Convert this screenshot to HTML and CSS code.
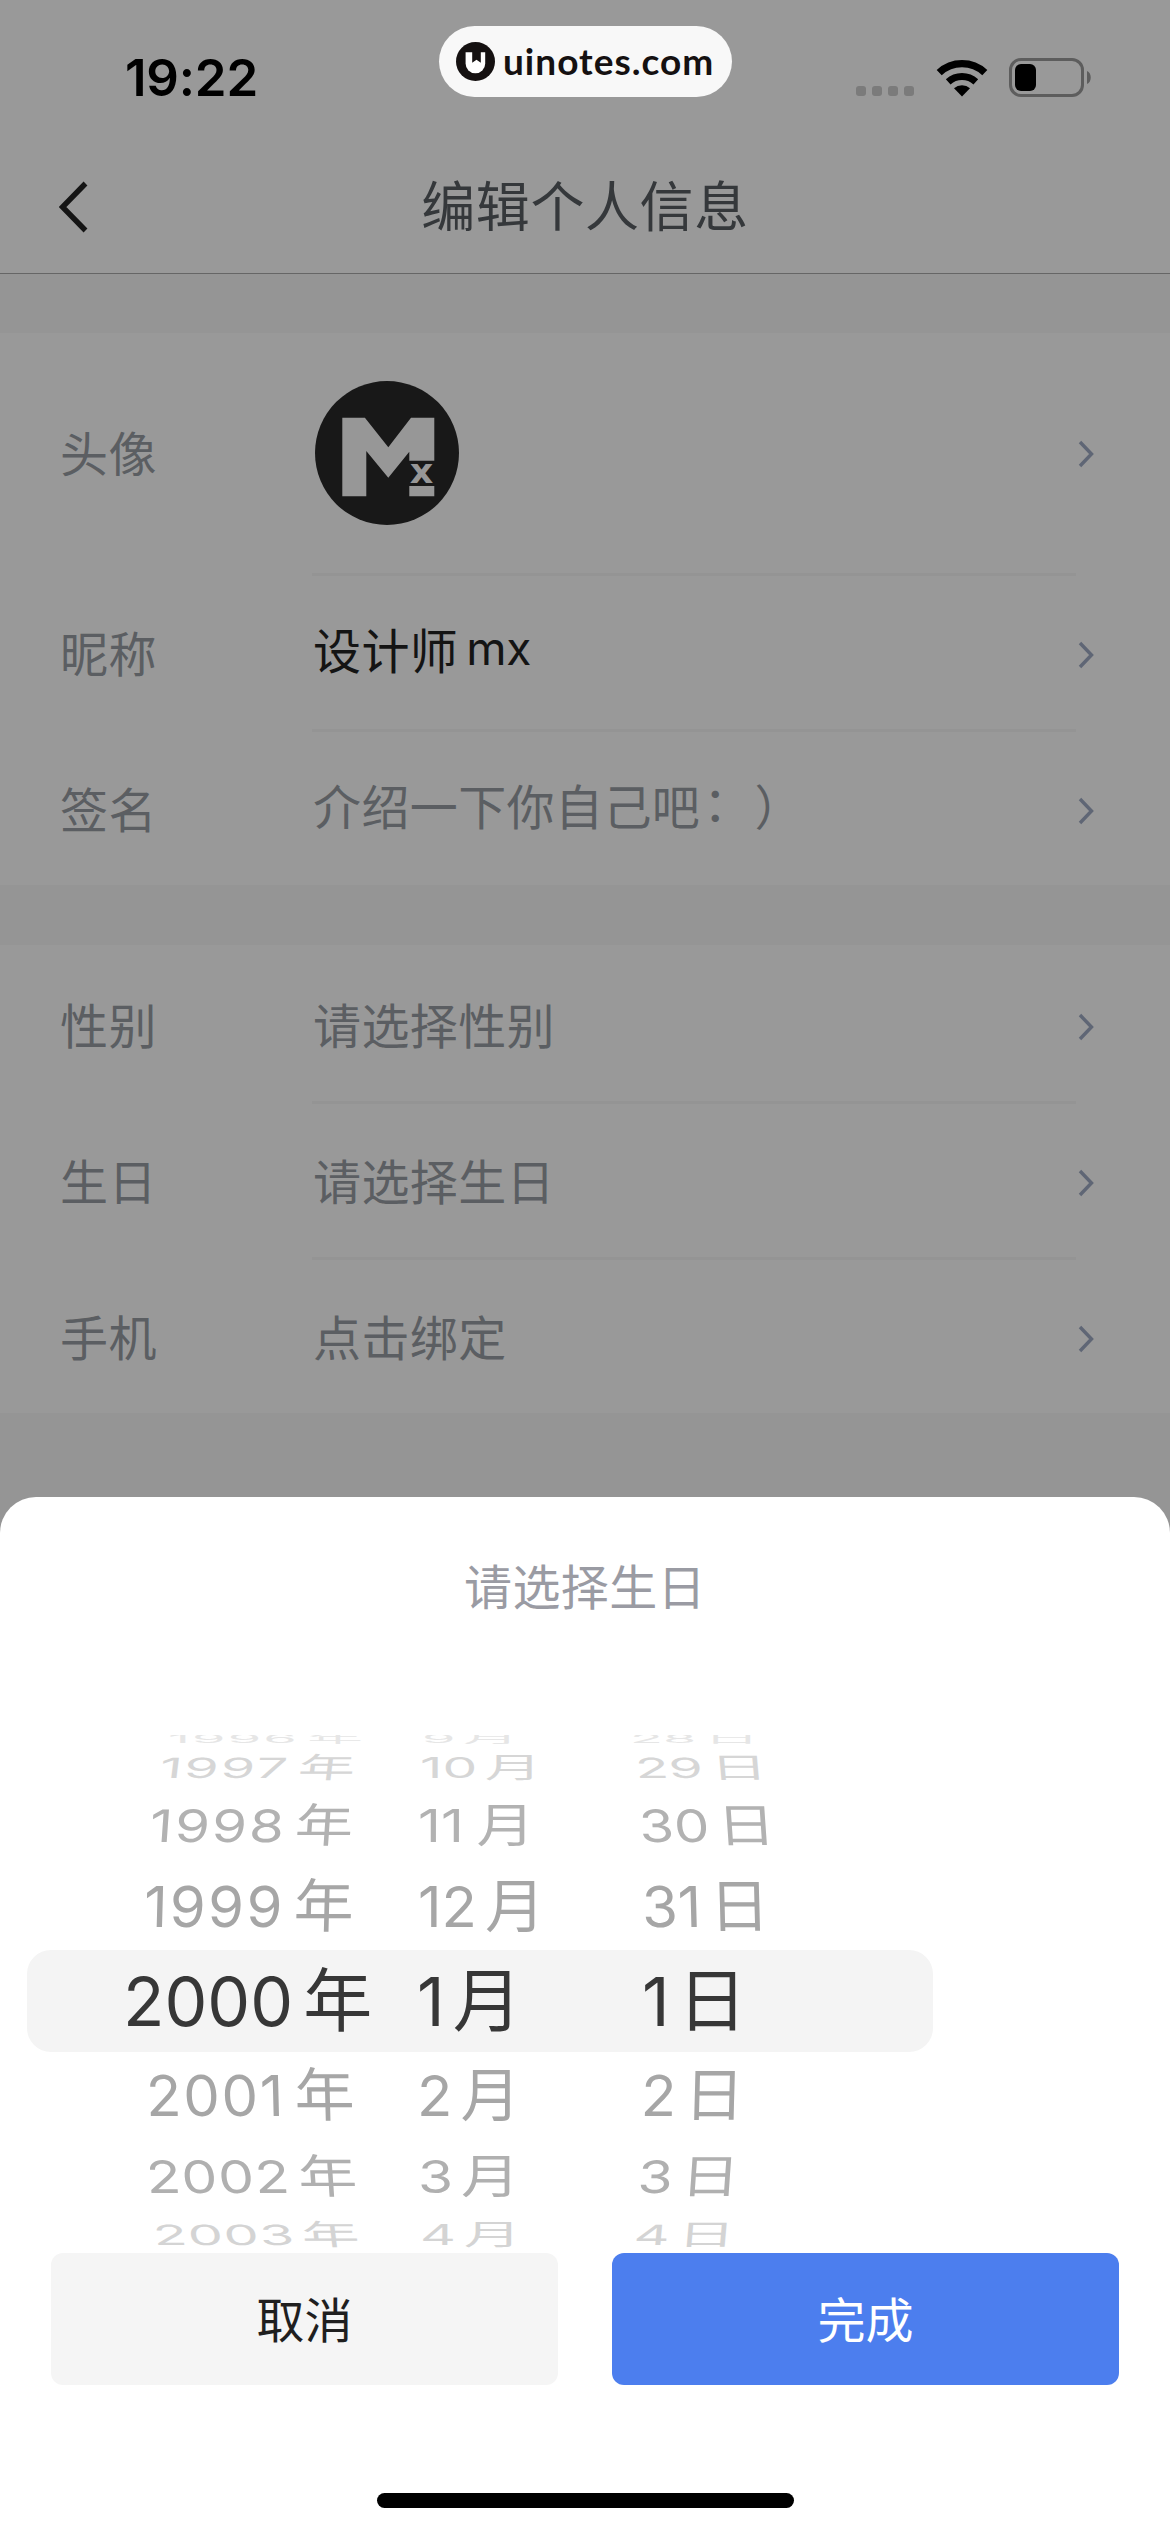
FILE: index.html
```html
<!DOCTYPE html>
<html lang="zh-CN">
<head>
<meta charset="utf-8">
<title>编辑个人信息</title>
<link rel="stylesheet" href="styles.css">
</head>
<body>
<svg class="defs" width="0" height="0" aria-hidden="true">
  <symbol id="chevron" viewBox="0 0 16 28"><path d="M2 2 13.5 14 2 26" fill="none" stroke="currentColor" stroke-width="3.4"/></symbol>
</svg>
<div class="screen">
  <header class="top">
    <div class="status">
      <span class="time">19:22</span>
      <div class="brand">
        <svg class="brand-mark" viewBox="0 0 39 39"><circle cx="19.5" cy="19.5" r="19.5" fill="#151111"/><path d="M9.600 10.200h19.600V21.500a9.800 9.800 0 0 1-19.600 0z" fill="#fff"/><path d="M16.200 9v11.800l4.300-3 4.300 3V9z" fill="#151111"/></svg>
        <span class="brand-name">uinotes.com</span>
      </div>
      <div class="indicators">
        <div class="dots"><i></i><i></i><i></i><i></i></div>
        <svg class="wifi" viewBox="0 0 52 38"><path d="M26 37.500 18 29.200a12 12 0 0 1 16 0z"/><path d="M12.200 22.800a20.500 20.500 0 0 1 27.600 0" fill="none" stroke="#000" stroke-width="7"/><path d="M3.200 13.600a33.500 33.500 0 0 1 45.600 0" fill="none" stroke="#000" stroke-width="7.400"/></svg>
        <svg class="battery" viewBox="0 0 84 39"><rect x="1.500" y="1.500" width="72" height="36" rx="10.500" fill="none" stroke="#5d5d5d" stroke-width="3"/><rect x="6" y="6" width="21" height="27" rx="6"/><path d="M78 13c5 2 5 11 0 13z" fill="#5d5d5d"/></svg>
      </div>
    </div>
    <div class="nav">
      <svg class="back" viewBox="0 0 30 52"><path d="M26.500 2.500 3.500 26l23 23.500" fill="none" stroke="#151515" stroke-width="5.400"/></svg>
      <h1>编辑个人信息</h1>
    </div>
  </header>
  <main>
    <section class="group">
      <div class="row avatar-row">
        <span class="label">头像</span>
        <div class="value">
          <svg class="avatar" viewBox="0 0 144 144"><circle cx="72" cy="72" r="72" fill="#181818"/><path fill="#979797" d="M27.300 36.700h22.600L73.300 66.300 96 36.700h23.300v43h-25v-9l-21 26L51.300 70v45.300h-24zM94.300 105h25v10.300h-25z"/><text class="avatar-x" x="106.800" y="101.800" text-anchor="middle" textLength="24" lengthAdjust="spacingAndGlyphs">x</text></svg>
        </div>
        <svg class="go"><use href="#chevron"/></svg>
      </div>
      <div class="row"><span class="label">昵称</span><div class="value line raised name">设计师<span class="latin">mx</span></div><svg class="go"><use href="#chevron"/></svg></div>
      <div class="row"><span class="label">签名</span><div class="value line raised">介绍一下你自己吧<span class="colon">：</span>）</div><svg class="go"><use href="#chevron"/></svg></div>
    </section>
    <section class="group">
      <div class="row"><span class="label">性别</span><div class="value">请选择性别</div><svg class="go"><use href="#chevron"/></svg></div>
      <div class="row"><span class="label">生日</span><div class="value line">请选择生日</div><svg class="go"><use href="#chevron"/></svg></div>
      <div class="row"><span class="label">手机</span><div class="value line">点击绑定</div><svg class="go"><use href="#chevron"/></svg></div>
    </section>
  </main>
  <section class="sheet">
    <h2>请选择生日</h2>
    <div class="picker">
      <div class="item t4"><div class="y"><p><b>1996</b>年</p></div><div class="m"><p><b>9</b>月</p></div><div class="d"><p><b>28</b>日</p></div></div>
      <div class="item t3"><div class="y"><p><b>1997</b>年</p></div><div class="m"><p><b>10</b>月</p></div><div class="d"><p><b>29</b>日</p></div></div>
      <div class="item t2"><div class="y"><p><b>1998</b>年</p></div><div class="m"><p><b>11</b>月</p></div><div class="d"><p><b>30</b>日</p></div></div>
      <div class="item t1"><div class="y"><p><b>1999</b>年</p></div><div class="m"><p><b>12</b>月</p></div><div class="d"><p><b>31</b>日</p></div></div>
      <div class="item now"><div class="y"><p><b>2000</b>年</p></div><div class="m"><p><b>1</b>月</p></div><div class="d"><p><b>1</b>日</p></div></div>
      <div class="item b1"><div class="y"><p><b>2001</b>年</p></div><div class="m"><p><b>2</b>月</p></div><div class="d"><p><b>2</b>日</p></div></div>
      <div class="item b2"><div class="y"><p><b>2002</b>年</p></div><div class="m"><p><b>3</b>月</p></div><div class="d"><p><b>3</b>日</p></div></div>
      <div class="item b3"><div class="y"><p><b>2003</b>年</p></div><div class="m"><p><b>4</b>月</p></div><div class="d"><p><b>4</b>日</p></div></div>
    </div>
    <div class="actions">
      <button class="cancel">取消</button>
      <button class="done">完成</button>
    </div>
    <div class="home"></div>
  </section>
</div>
</body>
</html>
```
FILE: styles.css
```css
* { box-sizing: border-box; }
body { margin: 0; background: #959595; font-family: "Noto Sans CJK SC", sans-serif; font-size: 48px; }
h1, h2, p { margin: 0; font-weight: 400; }
.defs { display: block; height: 0; }
.screen { width: 1170px; height: 2532px; display: flex; flex-direction: column; overflow: hidden; }

.top { height: 274px; background: #999; border-bottom: 1px solid #666; }
.status { height: 140px; display: grid; grid-template-columns: 439px 293px 438px; align-items: start; }
.time { padding: 47px 0 0 125px; font: 600 51px/61px Inter, sans-serif; letter-spacing: -0.2px; }
.brand { margin-top: 26px; height: 71px; border-radius: 36px; background: #f8f8f8; display: flex; align-items: center; padding-left: 17px; gap: 8px; }
.brand-mark { width: 39px; height: 39px; }
.brand-name { font: 700 37px/44px Lato, sans-serif; color: #151111; letter-spacing: 1px; padding-bottom: 1px; }
.indicators { display: flex; padding: 58px 0 0 124px; }
.dots { display: flex; gap: 6px; padding-top: 28px; width: 80px; }
.dots i { width: 10px; height: 10px; border-radius: 3px; background: #7b7b7b; }
.wifi { width: 52px; height: 38px; margin-top: 1px; }
.battery { width: 84px; height: 39px; margin-left: 21px; }
.nav { height: 133px; display: grid; grid-template-columns: 200px 770px 200px; align-items: center; }
.back { width: 30px; height: 52px; margin-left: 59px; }
.nav h1 { text-align: center; font-size: 54px; line-height: 80px; letter-spacing: 0.6px; color: #35383b; padding-bottom: 5px; }

.group { margin: 59px 0 0; background: #999; }
.group + .group { margin-top: 60px; }
.row { height: 156px; display: grid; grid-template-columns: 312px 764px 94px; color: #5b5e62; line-height: 70px; letter-spacing: 0.4px; }
.avatar-row { height: 240px; }
.label { align-self: center; padding: 0 0 0 60px; }
.avatar-row .label { padding-bottom: 5px; }
.value { display: flex; align-items: center; padding: 0 0 4px 1px; border-top: 3px solid transparent; }
.value.line { border-top-color: #949494; }
.value.raised { padding-bottom: 10px; }
.value.name { color: #141414; }
.avatar-row .value { padding: 0 0 3px 3px; }
.avatar { width: 144px; height: 144px; }
.avatar-x { font: bold 34px "DejaVu Sans", sans-serif; fill: #979797; }
.latin { font: 46px/70px Inter, sans-serif; letter-spacing: -0.3px; margin-left: 8px; padding-top: 1px; }
.colon { position: relative; top: -4px; left: 3px; margin-right: 6px; }
.go { width: 16px; height: 28px; align-self: center; margin: 7px 0 0 2px; color: #5f6675; }
.avatar-row .go { margin-top: 2px; }

.sheet { margin-top: 84px; height: 1035px; background: #fff; border-radius: 36px 36px 0 0; }
.sheet h2 { padding-top: 52px; height: 238px; text-align: center; font-size: 48px; line-height: 70px; letter-spacing: 0.4px; color: #9a9ba3; }
.picker { height: 518px; overflow: hidden; display: flex; flex-direction: column; }
.item { flex: none; display: grid; grid-template-columns: 400px 220px 400px; width: 1020px; }
.item > div { display: flex; align-items: center; height: 100%; min-height: 0; }
.item p { flex: none; height: 80px; line-height: 70px; font-size: 60px; white-space: nowrap; transform-origin: 0 50%; }
.item b { display: inline-block; font: 400 58px/70px Inter, sans-serif; margin-right: 8px; vertical-align: baseline; }
.item .y b { letter-spacing: 2.3px; margin-right: 9px; }
.item.b1 .y b { letter-spacing: 1.8px; }
.item.b2 .y b { letter-spacing: 0.8px; margin-right: 8px; }
.item.b3 .y b { letter-spacing: 0.8px; margin-right: 7px; }
.item.t2 .m b { margin-right: 13px; }
.t4 { height: 16px; margin-top: -4px; color: #e6e6e6; }
.t3 { height: 41px; color: #d6d6d6; }
.t2 { height: 75px; color: #b2b2b2; }
.t1 { height: 87px; color: #a6a6a6; }
.now { height: 102px; width: 906px; margin-left: 27px; border-radius: 24px; background: #f4f4f4; color: #373737; grid-template-columns: 373px 220px 313px; }
.b1 { height: 87px; color: #a6a6a6; }
.b2 { height: 75px; color: #b0b0b0; }
.b3 { height: 41px; color: #d4d4d4; }

.t4 p { transform: scale(.93, .2); }
.t3 p { transform: skewX(var(--lean, 0deg)) scale(.95, .48); }
.t2 p { transform: skewX(var(--lean, 0deg)) scale(.97, .77); }
.t1 p { transform: skewX(var(--lean, 0deg)) scale(1, .97); }
.b1 p { transform: skewX(var(--lean, 0deg)) scale(1, .97); }
.b2 p { transform: skewX(var(--lean, 0deg)) scale(.98, .77); }
.b3 p { transform: skewX(var(--lean, 0deg)) scale(.96, .48); }
.t3 .y { --lean: -7deg; } .t2 .y { --lean: -4deg; } .t1 .y { --lean: -1.5deg; }
.b3 .y { --lean: 7deg; } .b2 .y { --lean: 4deg; } .b1 .y { --lean: 1.5deg; }
.t3 .d { --lean: 5deg; } .t2 .d { --lean: 4deg; } .t1 .d { --lean: 1.5deg; }
.b3 .d { --lean: -5deg; } .b2 .d { --lean: -4deg; } .b1 .d { --lean: -1.5deg; }
.now p { font-size: 69px; }
.now b { font-size: 68px; }
.item.now .y b { letter-spacing: 0; margin-right: 10px; }

.t4 .y { padding-left: 168px; } .t4 .m { padding-left: 22px; } .t4 .d { padding-left: 10px; }
.t3 .y { padding-left: 160px; } .t3 .m { padding-left: 20px; } .t3 .d { padding-left: 15px; }
.t2 .y { padding-left: 150px; } .t2 .m { padding-left: 18px; } .t2 .d { padding-left: 19px; }
.t1 .y { padding-left: 144px; } .t1 .m { padding-left: 18px; } .t1 .d { padding-left: 22px; }
.now .y { padding-left: 96px; } .now .m { padding-left: 17px; } .now .d { padding-left: 22px; }
.b1 .y { padding-left: 146px; } .b1 .m { padding-left: 17px; } .b1 .d { padding-left: 21px; }
.b2 .y { padding-left: 146px; } .b2 .m { padding-left: 18px; } .b2 .d { padding-left: 18px; }
.b3 .y { padding-left: 153px; } .b3 .m { padding-left: 20px; } .b3 .d { padding-left: 14px; }

.actions { display: flex; gap: 54px; padding: 0 51px; }
.actions button { width: 507px; height: 132px; border: 0; border-radius: 12px; font: 400 48px/70px "Noto Sans CJK SC", sans-serif; padding: 0 0 4px; }
.cancel { background: #f5f5f5; color: #1f1f1f; }
.done { background: #4c7eee; color: #fff; }
.home { width: 417px; height: 15px; margin: 108px auto 0 377px; border-radius: 8px; background: #000; }
```
